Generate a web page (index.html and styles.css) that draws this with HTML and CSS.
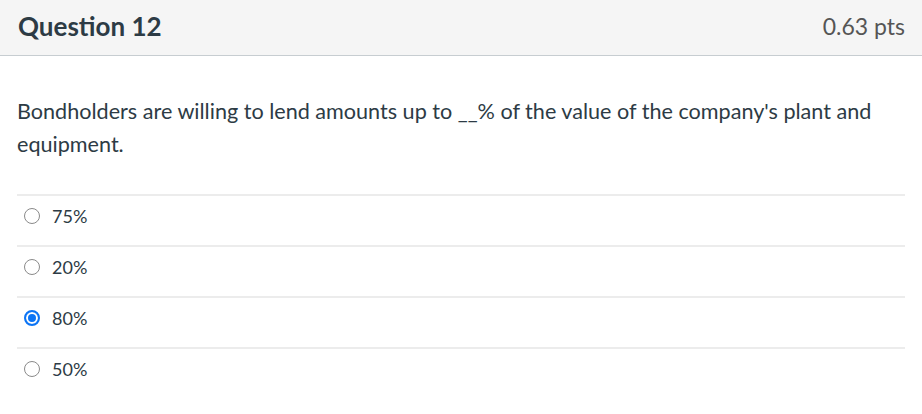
FILE: index.html
```html
<!DOCTYPE html>
<html>
<head>
<meta charset="utf-8">
<link rel="stylesheet" href="styles.css">
</head>
<body>
<div class="question">
  <div class="q-header">
    <span class="q-title">Question 12</span>
    <span class="q-pts">0.63 pts</span>
  </div>
  <div class="q-body">
    <p class="q-text">Bondholders are willing to lend amounts up to __% of the value of the company's plant and equipment.</p>
    <div class="answers">
      <label class="answer"><span class="radio"></span><span class="a-text">75%</span></label>
      <label class="answer"><span class="radio"></span><span class="a-text">20%</span></label>
      <label class="answer"><span class="radio checked"></span><span class="a-text">80%</span></label>
      <label class="answer"><span class="radio"></span><span class="a-text">50%</span></label>
    </div>
  </div>
</div>
</body>
</html>
```
FILE: styles.css
```css
html, body {
  margin: 0;
  padding: 0;
  background: #ffffff;
}
body {
  font-family: Lato, "Noto Sans", sans-serif;
  color: #2d3b45;
}
.q-header {
  height: 56px;
  box-sizing: border-box;
  background: #f5f5f5;
  border-bottom: 1px solid #c7cdd1;
  display: flex;
  align-items: center;
  justify-content: space-between;
  padding: 0 17px 4px 18px;
}
.q-title {
  font-weight: 700;
  font-size: 26px;
  color: #2d3b45;
}
.q-pts {
  font-size: 23px;
  color: #555555;
}
.q-body {
  padding: 0 17px;
}
.q-text {
  margin: 0;
  padding-top: 39px;
  font-size: 21.6px;
  line-height: 33px;
  color: #2d3b45;
}
.answers {
  margin-top: 33px;
}
.answer {
  display: flex;
  align-items: center;
  height: 51px;
  box-sizing: border-box;
  border-top: 2px solid #ececec;
  padding: 0 0 10px 7px;
  gap: 12px;
}
.radio {
  width: 16px;
  height: 16px;
  box-sizing: border-box;
  border: 1.5px solid #8a8a8a;
  border-radius: 50%;
  background: #fff;
}
.radio.checked {
  border: 2px solid #0b74f5;
  box-shadow: inset 0 0 0 2px #fff, inset 0 0 0 6px #0b74f5;
}
.a-text {
  font-size: 18px;
  color: #2d3b45;
}
```
